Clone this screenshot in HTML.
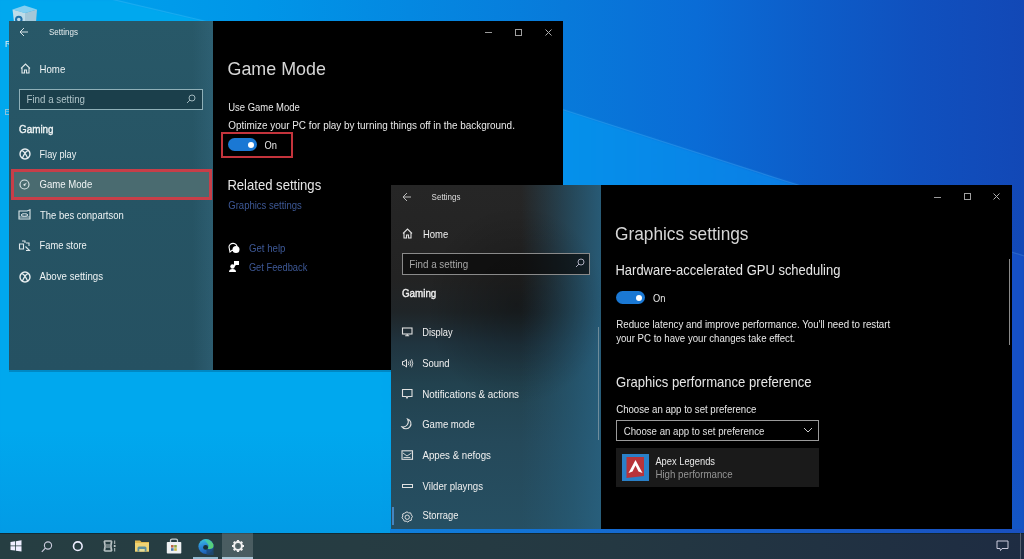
<!DOCTYPE html>
<html><head><meta charset="utf-8"><style>
html,body{margin:0;padding:0;width:1024px;height:559px;overflow:hidden;background:#0a6fd0}
body{position:relative;font-family:"Liberation Sans", sans-serif}
.t{position:absolute;white-space:nowrap;line-height:normal;font-family:"Liberation Sans", sans-serif}
svg{overflow:visible}
</style></head><body>
<div style="position:absolute;left:0px;top:0px;width:1024px;height:559px;background:linear-gradient(90deg,rgb(0,165,238) 0%,rgb(0,150,232) 25%,rgb(8,122,218) 55%,rgb(10,108,214) 68%,rgb(13,92,200) 80%,rgb(16,80,190) 90%,rgb(18,72,182) 100%)"></div>
<div style="position:absolute;left:0;top:0;width:1024px;height:559px;filter:blur(1px)"><div style="position:absolute;left:0;top:0;width:1024px;height:559px;clip-path:polygon(0px -27px,200px 20px,564px 110px,782px 180px,1024px 256px,1024px 559px,0px 559px);background:linear-gradient(90deg,rgb(0,168,238) 0%,rgb(0,168,238) 37%,rgb(5,145,235) 55%,rgb(10,128,230) 75%,rgb(16,100,212) 88%,rgb(22,78,195) 100%)"></div></div>
<svg style="position:absolute;left:0;top:0" width="1024" height="559"><polyline points="0,-27 200,20 564,110 782,180 1024,256" fill="none" stroke="rgba(140,210,255,.18)" stroke-width="1.2"/></svg>
<div style="position:absolute;left:0px;top:430px;width:1024px;height:103px;background:linear-gradient(180deg,rgba(10,110,200,0),rgba(10,110,200,.22))"></div>
<svg style="position:absolute;left:0px;top:0px;" width="42" height="22" viewBox="0 0 42 22"><path d="M12.5 9.5 L24.5 5.5 L37 9.5 L25 13 Z" fill="rgba(175,220,242,.75)"/><path d="M12.5 9.5 L25 13 L25 22 L14 22 Z" fill="rgba(205,225,232,.92)"/><path d="M25 13 L37 9.5 L36 22 L25 22 Z" fill="rgba(178,202,214,.92)"/><circle cx="18.8" cy="19.5" r="2.8" fill="none" stroke="#1f70a8" stroke-width="2"/></svg>
<div class="t" style="left:5.00px;top:38.61px;font-size:8.50px;color:#e6eef2;font-weight:400;transform:scaleY(1.13);transform-origin:0 7.69px;">R</div>
<div class="t" style="left:4.50px;top:106.81px;font-size:8.50px;color:#a8c8d8;font-weight:400;transform:scaleY(1.13);transform-origin:0 7.69px;">E</div>
<div style="position:absolute;left:9px;top:21px;width:204px;height:349px;background:linear-gradient(180deg,#285868 0%,#265464 50%,#255162 100%)"></div>
<div style="position:absolute;left:9px;top:21px;width:204px;height:349px;background:linear-gradient(90deg,rgba(60,115,140,0) 90%,rgba(60,115,140,.3) 100%)"></div>
<div style="position:absolute;left:213px;top:21px;width:350px;height:349px;background:#000"></div>
<div style="position:absolute;left:9px;top:370px;width:554px;height:2px;background:rgba(0,40,70,.25)"></div>
<svg style="position:absolute;left:19px;top:27px;" width="10" height="10" viewBox="0 0 10 10"><path d="M1 5 H9 M1 5 L5 1 M1 5 L5 9" stroke="#d8e2e6" stroke-width="1" fill="none"/></svg>
<div class="t" style="left:49.00px;top:28.06px;font-size:8.00px;color:#e8eef0;font-weight:400;transform:scaleY(1.13);transform-origin:0 7.24px;">Settings</div>
<div style="position:absolute;left:485px;top:32px;width:7px;height:1px;background:#9a9a9a"></div>
<div style="position:absolute;left:514.5px;top:29px;width:7px;height:7px;border:1px solid #a0a0a0;box-sizing:border-box"></div>
<svg style="position:absolute;left:544.5px;top:29px;" width="7" height="7" viewBox="0 0 7 7"><path d="M0.5 0.5 L6.5 6.5 M6.5 0.5 L0.5 6.5" stroke="#b0b0b0" stroke-width="1"/></svg>
<svg style="position:absolute;left:20px;top:63px;" width="11" height="11" viewBox="0 0 11 11"><path d="M1 5.5 L5.5 1 L10 5.5 M2 4.5 V10 H4.5 V7 H6.5 V10 H9 V4.5" stroke="#dfe8ea" stroke-width="1.1" fill="none"/></svg>
<div class="t" style="left:39.50px;top:63.96px;font-size:9.66px;color:#eef3f4;font-weight:400;transform:scaleY(1.13);transform-origin:0 8.74px;">Home</div>
<div style="position:absolute;left:19px;top:89px;width:184px;height:21px;border:1.5px solid #8fb0b8;box-sizing:border-box;background:#1b3f4b"></div>
<div class="t" style="left:26.50px;top:93.88px;font-size:9.75px;color:#aec3c8;font-weight:400;transform:scaleY(1.13);transform-origin:0 8.82px;">Find a setting</div>
<svg style="position:absolute;left:186px;top:94px;" width="10" height="10" viewBox="0 0 10 10"><circle cx="6" cy="4" r="3" stroke="#9fb6bc" stroke-width="1" fill="none"/><path d="M4 6 L1 9" stroke="#9fb6bc" stroke-width="1"/></svg>
<div class="t" style="left:19.00px;top:124.04px;font-size:9.90px;color:#eef3f4;font-weight:400;transform:scaleY(1.13);transform-origin:0 8.96px;-webkit-text-stroke:0.35px #eef3f4;">Gaming</div>
<svg style="position:absolute;left:18.5px;top:148px;" width="12" height="12" viewBox="0 0 12 12"><circle cx="6" cy="6" r="5" stroke="#e8eef0" stroke-width="1.4" fill="none"/><path d="M2.6 2.6 Q5.5 2.6 8.8 10.6 M9.4 2.6 Q6.5 2.6 3.2 10.6" stroke="#e8eef0" stroke-width="1.3" fill="none"/></svg>
<div class="t" style="left:39.50px;top:149.87px;font-size:9.20px;color:#eef3f4;font-weight:400;transform:scaleY(1.13);transform-origin:0 8.33px;">Flay play</div>
<div style="position:absolute;left:11px;top:169px;width:201px;height:31px;background:#4a6b70;border:3px solid #c83e48;box-sizing:border-box"></div>
<svg style="position:absolute;left:19px;top:179px;" width="11" height="11" viewBox="0 0 11 11"><circle cx="5.5" cy="5.5" r="4.5" stroke="#dde7ea" stroke-width="1.1" fill="none"/><circle cx="5.5" cy="5.8" r="1.1" fill="#dde7ea"/><path d="M5.5 5.8 L7.5 3.8" stroke="#dde7ea" stroke-width="0.9"/></svg>
<div class="t" style="left:39.50px;top:179.31px;font-size:9.60px;color:#eef3f4;font-weight:400;transform:scaleY(1.13);transform-origin:0 8.69px;">Game Mode</div>
<svg style="position:absolute;left:18px;top:209px;" width="13" height="11" viewBox="0 0 13 11"><path d="M1 2 H9 L12 0.8 V10 H1 Z" stroke="#dde7ea" stroke-width="1.1" fill="none"/><ellipse cx="6.5" cy="6" rx="3.3" ry="1.3" stroke="#dde7ea" stroke-width="1" fill="none"/><path d="M1 8 H12" stroke="#dde7ea" stroke-width="0.8"/></svg>
<div class="t" style="left:40.00px;top:210.43px;font-size:9.47px;color:#eef3f4;font-weight:400;transform:scaleY(1.13);transform-origin:0 8.57px;">The bes conpartson</div>
<svg style="position:absolute;left:18px;top:240px;" width="13" height="11" viewBox="0 0 13 11"><path d="M1.5 4 H5.5 V9 H1.5 Z M4 1 H7 L7 3 M8 3 L11 3 V6 M7.5 6.5 L11.5 10.5 H8" stroke="#dde7ea" stroke-width="1.1" fill="none"/></svg>
<div class="t" style="left:39.50px;top:240.66px;font-size:9.33px;color:#eef3f4;font-weight:400;transform:scaleY(1.13);transform-origin:0 8.44px;">Fame store</div>
<svg style="position:absolute;left:18.5px;top:270.5px;" width="12" height="12" viewBox="0 0 12 12"><circle cx="6" cy="6" r="5" stroke="#e8eef0" stroke-width="1.4" fill="none"/><path d="M2.6 2.6 Q5.5 2.6 8.8 10.6 M9.4 2.6 Q6.5 2.6 3.2 10.6" stroke="#e8eef0" stroke-width="1.3" fill="none"/></svg>
<div class="t" style="left:39.50px;top:271.22px;font-size:9.70px;color:#eef3f4;font-weight:400;transform:scaleY(1.13);transform-origin:0 8.78px;">Above settings</div>
<div class="t" style="left:227.50px;top:58.80px;font-size:17.90px;color:#d6d6d6;font-weight:400;transform:scaleY(1.02);transform-origin:0 16.20px;">Game Mode</div>
<div class="t" style="left:228.30px;top:102.14px;font-size:9.46px;color:#e8e8e8;font-weight:400;transform:scaleY(1.13);transform-origin:0 8.56px;">Use Game Mode</div>
<div class="t" style="left:228.30px;top:120.40px;font-size:9.94px;color:#e8e8e8;font-weight:400;transform:scaleY(1.13);transform-origin:0 9.00px;">Optimize your PC for play by turning things off in the background.</div>
<div style="position:absolute;left:220.5px;top:132px;width:72.5px;height:26px;border:2.5px solid #c4343c;box-sizing:border-box"></div>
<div style="position:absolute;left:228px;top:138px;width:29px;height:13px;background:#1a78d4;border-radius:7px"></div>
<div style="position:absolute;left:247.5px;top:141.5px;width:6px;height:6px;background:#fff;border-radius:3px"></div>
<div class="t" style="left:264.50px;top:141.08px;font-size:9.30px;color:#e8e8e8;font-weight:400;transform:scaleY(1.13);transform-origin:0 8.42px;">On</div>
<div class="t" style="left:227.40px;top:177.76px;font-size:13.08px;color:#e6e6e6;font-weight:400;transform:scaleY(1.08);transform-origin:0 11.84px;">Related settings</div>
<div class="t" style="left:228.30px;top:199.58px;font-size:9.52px;color:#3d5896;font-weight:400;transform:scaleY(1.13);transform-origin:0 8.62px;">Graphics settings</div>
<svg style="position:absolute;left:228px;top:242px;" width="12" height="12" viewBox="0 0 12 12"><path d="M1 5 a4 3.5 0 1 1 3 3.3 L2 10 Z" fill="none" stroke="#fff" stroke-width="1.1"/><circle cx="8" cy="7.5" r="3.5" fill="#fff"/></svg>
<div class="t" style="left:248.90px;top:242.76px;font-size:9.66px;color:#3d5896;font-weight:400;transform:scaleY(1.13);transform-origin:0 8.74px;">Get help</div>
<svg style="position:absolute;left:228px;top:260px;" width="12" height="13" viewBox="0 0 12 13"><path d="M6 1 H11 V5 H8 L6 7 Z" fill="#fff"/><circle cx="4.5" cy="6.5" r="2.2" fill="#fff"/><path d="M1 12 Q1 9 4.5 9 Q8 9 8 12 Z" fill="#fff"/></svg>
<div class="t" style="left:248.90px;top:263.18px;font-size:9.30px;color:#3d5896;font-weight:400;transform:scaleY(1.13);transform-origin:0 8.42px;">Get Feedback</div>
<div style="position:absolute;left:390.5px;top:185px;width:210.5px;height:344px;background:linear-gradient(180deg,#262626 0%,#232323 27%,#1f2528 37%,#20343f 46%,#22424f 58%,#25495a 75%,#264f62 100%)"></div>
<div style="position:absolute;left:390.5px;top:185px;width:210.5px;height:344px;background:linear-gradient(90deg,rgba(38,90,118,0) 0%,rgba(38,90,118,0) 62%,rgba(38,90,118,.3) 74%,rgba(38,92,120,.65) 87%,rgba(40,96,126,.9) 100%)"></div>
<div style="position:absolute;left:390.5px;top:185px;width:210.5px;height:344px;background:radial-gradient(ellipse 90px 100px at 125px 120px,rgba(0,0,0,.3),rgba(0,0,0,0))"></div>
<div style="position:absolute;left:601px;top:185px;width:411px;height:344px;background:#000"></div>
<svg style="position:absolute;left:402px;top:192px;" width="10" height="10" viewBox="0 0 10 10"><path d="M1 5 H9 M1 5 L5 1 M1 5 L5 9" stroke="#bbb" stroke-width="1" fill="none"/></svg>
<div class="t" style="left:431.60px;top:192.76px;font-size:8.00px;color:#ddd;font-weight:400;transform:scaleY(1.13);transform-origin:0 7.24px;">Settings</div>
<div style="position:absolute;left:934px;top:196.5px;width:7px;height:1px;background:#9a9a9a"></div>
<div style="position:absolute;left:963.5px;top:193px;width:7px;height:7px;border:1px solid #a0a0a0;box-sizing:border-box"></div>
<svg style="position:absolute;left:993px;top:193px;" width="7" height="7" viewBox="0 0 7 7"><path d="M0.5 0.5 L6.5 6.5 M6.5 0.5 L0.5 6.5" stroke="#b0b0b0" stroke-width="1"/></svg>
<svg style="position:absolute;left:402px;top:228px;" width="11" height="11" viewBox="0 0 11 11"><path d="M1 5.5 L5.5 1 L10 5.5 M2 4.5 V10 H4.5 V7 H6.5 V10 H9 V4.5" stroke="#e0e0e0" stroke-width="1.1" fill="none"/></svg>
<div class="t" style="left:423.00px;top:228.62px;font-size:9.48px;color:#f0f0f0;font-weight:400;transform:scaleY(1.13);transform-origin:0 8.58px;">Home</div>
<div style="position:absolute;left:402px;top:253px;width:188px;height:22px;border:1.5px solid #8a8a8a;box-sizing:border-box;background:rgba(10,10,10,.7)"></div>
<div class="t" style="left:409.30px;top:258.80px;font-size:9.83px;color:#a8a8a8;font-weight:400;transform:scaleY(1.13);transform-origin:0 8.90px;">Find a setting</div>
<svg style="position:absolute;left:575px;top:258px;" width="10" height="10" viewBox="0 0 10 10"><circle cx="6" cy="4" r="3" stroke="#aab" stroke-width="1" fill="none"/><path d="M4 6 L1 9" stroke="#aab" stroke-width="1"/></svg>
<div class="t" style="left:402.00px;top:288.23px;font-size:9.80px;color:#f0f0f0;font-weight:400;transform:scaleY(1.13);transform-origin:0 8.87px;-webkit-text-stroke:0.35px #f0f0f0;">Gaming</div>
<svg style="position:absolute;left:401px;top:327px;" width="12" height="10" viewBox="0 0 12 10"><rect x="1.5" y="1" width="9.5" height="6" stroke="#e0e0e0" stroke-width="1.1" fill="none"/><path d="M6.2 7 V8.8 M4.2 8.8 H8.2" stroke="#e0e0e0" stroke-width="1.1"/></svg>
<div class="t" style="left:422.20px;top:327.58px;font-size:9.30px;color:#f0f0f0;font-weight:400;transform:scaleY(1.13);transform-origin:0 8.42px;">Display</div>
<svg style="position:absolute;left:401px;top:358px;" width="12" height="11" viewBox="0 0 12 11"><path d="M1.5 3.5 H3 L5.5 1.5 V9 L3 7 H1.5 Z" stroke="#e0e0e0" stroke-width="1" fill="none"/><path d="M7.3 3.5 Q8.5 5.3 7.3 7 M9 2.3 Q10.8 5.3 9 8.3 M10.6 1.2 Q13 5.3 10.6 9.4" stroke="#e0e0e0" stroke-width="0.9" fill="none"/></svg>
<div class="t" style="left:422.20px;top:357.90px;font-size:9.50px;color:#f0f0f0;font-weight:400;transform:scaleY(1.13);transform-origin:0 8.60px;">Sound</div>
<svg style="position:absolute;left:401px;top:388px;" width="12" height="12" viewBox="0 0 12 12"><path d="M1.5 1.5 H11 V8.5 H6.8 L6 10 L5.2 8.5 H1.5 Z" stroke="#e0e0e0" stroke-width="1.1" fill="none"/></svg>
<div class="t" style="left:422.20px;top:388.78px;font-size:9.86px;color:#f0f0f0;font-weight:400;transform:scaleY(1.13);transform-origin:0 8.92px;">Notifications &amp; actions</div>
<svg style="position:absolute;left:401px;top:418px;" width="12" height="12" viewBox="0 0 12 12"><path d="M6.5 1 A5 5 0 1 1 1 8.8 A5.2 5.2 0 0 0 6.5 1 Z" stroke="#e0e0e0" stroke-width="1.1" fill="none"/></svg>
<div class="t" style="left:422.20px;top:419.05px;font-size:9.56px;color:#f0f0f0;font-weight:400;transform:scaleY(1.13);transform-origin:0 8.65px;">Game mode</div>
<svg style="position:absolute;left:401px;top:450px;" width="12" height="11" viewBox="0 0 12 11"><rect x="1" y="0.8" width="10.5" height="8.5" stroke="#e0e0e0" stroke-width="1.1" fill="none"/><path d="M2 3 L6 6 L10.5 3 M2.5 7.5 H9.5" stroke="#e0e0e0" stroke-width="0.9" fill="none"/></svg>
<div class="t" style="left:422.50px;top:450.02px;font-size:9.70px;color:#f0f0f0;font-weight:400;transform:scaleY(1.13);transform-origin:0 8.78px;">Appes &amp; nefogs</div>
<div style="position:absolute;left:402px;top:483.5px;width:10.5px;height:4px;border:1px solid #e0e0e0;box-sizing:border-box"></div>
<div class="t" style="left:422.50px;top:480.76px;font-size:9.66px;color:#f0f0f0;font-weight:400;transform:scaleY(1.13);transform-origin:0 8.74px;">Vilder playngs</div>
<svg style="position:absolute;left:401px;top:511px;" width="12" height="12" viewBox="0 0 12 12"><path d="M6 0.8 L7.6 1.9 L9.6 1.9 L10.3 3.8 L11.4 5.5 L10.4 7.3 L10.3 9.2 L8.3 9.8 L6.8 11 L5.2 10.2 L3.2 10.1 L2.3 8.3 L1 6.8 L1.8 5 L1.7 3 L3.6 2.2 Z" stroke="#e0e0e0" stroke-width="1" fill="none"/><circle cx="6.2" cy="6.2" r="2.2" stroke="#e0e0e0" stroke-width="1" fill="none"/></svg>
<div class="t" style="left:422.50px;top:511.41px;font-size:9.38px;color:#f0f0f0;font-weight:400;transform:scaleY(1.13);transform-origin:0 8.49px;">Storrage</div>
<div style="position:absolute;left:392px;top:507px;width:1.5px;height:18px;background:#4585c0"></div>
<div style="position:absolute;left:598px;top:327px;width:1px;height:113px;background:rgba(200,200,200,.45)"></div>
<div class="t" style="left:615.00px;top:223.84px;font-size:17.30px;color:#d6d6d6;font-weight:400;transform:scaleY(1.02);transform-origin:0 15.66px;">Graphics settings</div>
<div class="t" style="left:615.50px;top:263.26px;font-size:12.97px;color:#e6e6e6;font-weight:400;transform:scaleY(1.08);transform-origin:0 11.74px;">Hardware-accelerated GPU scheduling</div>
<div style="position:absolute;left:616px;top:291px;width:29px;height:13px;background:#1a78d4;border-radius:7px"></div>
<div style="position:absolute;left:635.5px;top:294.5px;width:6px;height:6px;background:#fff;border-radius:3px"></div>
<div class="t" style="left:653.00px;top:293.98px;font-size:9.30px;color:#e8e8e8;font-weight:400;transform:scaleY(1.13);transform-origin:0 8.42px;">On</div>
<div class="t" style="left:616.20px;top:318.79px;font-size:9.74px;color:#e8e8e8;font-weight:400;transform:scaleY(1.13);transform-origin:0 8.81px;">Reduce latency and improve performance. You'll need to restart</div>
<div class="t" style="left:616.20px;top:332.52px;font-size:9.65px;color:#e8e8e8;font-weight:400;transform:scaleY(1.13);transform-origin:0 8.73px;">your PC to have your changes take effect.</div>
<div class="t" style="left:616.00px;top:375.15px;font-size:13.09px;color:#e6e6e6;font-weight:400;transform:scaleY(1.08);transform-origin:0 11.85px;">Graphics performance preference</div>
<div class="t" style="left:616.20px;top:404.28px;font-size:9.64px;color:#e8e8e8;font-weight:400;transform:scaleY(1.13);transform-origin:0 8.72px;">Choose an app to set preference</div>
<div style="position:absolute;left:616px;top:420px;width:203px;height:21px;border:1.5px solid #9a9a9a;box-sizing:border-box"></div>
<div class="t" style="left:623.70px;top:426.06px;font-size:9.66px;color:#e0e0e0;font-weight:400;transform:scaleY(1.13);transform-origin:0 8.74px;">Choose an app to set preference</div>
<svg style="position:absolute;left:803px;top:427px;" width="10" height="6" viewBox="0 0 10 6"><path d="M1 1 L5 5 L9 1" stroke="#ccc" stroke-width="1" fill="none"/></svg>
<div style="position:absolute;left:616px;top:448px;width:203px;height:39px;background:#1a1a1a"></div>
<div style="position:absolute;left:622px;top:453.5px;width:27px;height:27px;background:#2a80c8"></div>
<svg style="position:absolute;left:622px;top:453.5px;" width="27" height="27" viewBox="0 0 27 27"><path d="M4.5 3 H22 V22 L4.5 24 Z" fill="#b8343a"/></svg>
<svg style="position:absolute;left:622px;top:453.5px;" width="27" height="27" viewBox="0 0 27 27"><path d="M13.5 6 L20.5 19 L16.5 17.5 L13.5 11.5 L10.5 17.5 L6.5 19 Z" fill="#fff"/></svg>
<div class="t" style="left:655.40px;top:457.36px;font-size:9.33px;color:#e8e8e8;font-weight:400;transform:scaleY(1.13);transform-origin:0 8.44px;">Apex Legends</div>
<div class="t" style="left:655.40px;top:469.20px;font-size:9.72px;color:#959595;font-weight:400;transform:scaleY(1.13);transform-origin:0 8.80px;">High performance</div>
<div style="position:absolute;left:1008.5px;top:259px;width:1px;height:86px;background:#8a8a8a"></div>
<div style="position:absolute;left:390px;top:529px;width:634px;height:4px;background:linear-gradient(90deg,rgb(15,128,220) 0%,rgb(22,100,205) 45%,rgb(25,80,192) 100%)"></div>
<div style="position:absolute;left:0px;top:533px;width:1024px;height:26px;background:linear-gradient(90deg,#263e42 0%,#263c42 35%,#243842 60%,#1e2c42 100%)"></div>
<div style="position:absolute;left:0px;top:533px;width:1024px;height:1px;background:rgba(12,35,45,.7)"></div>
<svg style="position:absolute;left:10px;top:540px;" width="12" height="12" viewBox="0 0 12 12"><path d="M0.5 2 L5 1.3 V5.5 H0.5 Z M5.8 1.2 L11.5 0.3 V5.5 H5.8 Z M0.5 6.3 H5 V10.6 L0.5 10 Z M5.8 6.3 H11.5 V11.6 L5.8 10.8 Z" fill="#eef"/></svg>
<svg style="position:absolute;left:41px;top:541px;" width="12" height="12" viewBox="0 0 12 12"><circle cx="7" cy="4.5" r="3.6" stroke="#ccd" stroke-width="1.1" fill="none"/><path d="M4.4 7.2 L0.8 10.8" stroke="#ccd" stroke-width="1.2"/></svg>
<svg style="position:absolute;left:72px;top:541px;" width="12" height="12" viewBox="0 0 12 12"><circle cx="5.8" cy="5.2" r="4.3" stroke="#eef" stroke-width="1.6" fill="none"/></svg>
<svg style="position:absolute;left:103px;top:540px;" width="14" height="12" viewBox="0 0 14 12"><path d="M1.2 1 Q3 6 1.2 11 M8.8 1 Q7 6 8.8 11 M1.2 1 H8.8 M1.2 11 H8.8" stroke="#b8c2c4" stroke-width="1.6" fill="none"/><path d="M3 5 H7 M3 7 H7" stroke="#b8c2c4" stroke-width="1"/><path d="M11.7 0.5 V4 M11.7 8 V11.5" stroke="#b8c2c4" stroke-width="1"/><circle cx="11.7" cy="6" r="1.1" fill="#c8d0d2"/></svg>
<svg style="position:absolute;left:134px;top:539px;" width="16" height="13" viewBox="0 0 16 13"><path d="M1 1.5 H6 L7.5 3 H15 V12.5 H1 Z" fill="#e2b94e"/><rect x="1" y="4" width="14" height="8.5" fill="#f0d474"/><path d="M3.5 12.5 V9 Q3.5 7.5 5 7.5 H11 Q12.5 7.5 12.5 9 V12.5 H10.5 V10 H5.5 V12.5 Z" fill="#5c8f9c"/><rect x="5.5" y="10" width="5" height="2.5" fill="#e4dc98"/></svg>
<svg style="position:absolute;left:166px;top:538px;" width="16" height="16" viewBox="0 0 16 16"><path d="M4.5 4 V2.5 Q4.5 1.2 6 1.2 H10 Q11.5 1.2 11.5 2.5 V4" stroke="#c4cfd2" stroke-width="1.3" fill="none"/><rect x="0.8" y="4" width="14.5" height="11.5" rx="0.8" fill="#eef1f3"/><rect x="5" y="7" width="2.6" height="2.6" fill="#b86448"/><rect x="8.2" y="7" width="2.6" height="2.6" fill="#8aa640"/><rect x="5" y="10.2" width="2.6" height="2.6" fill="#4c78a8"/><rect x="8.2" y="10.2" width="2.6" height="2.6" fill="#c8b840"/></svg>
<svg style="position:absolute;left:197px;top:538px;" width="18" height="17" viewBox="0 0 18 17"><defs><linearGradient id="eg" x1="0.2" y1="0" x2="0.5" y2="1"><stop offset="0" stop-color="#3cc4dc"/><stop offset="0.45" stop-color="#2a88d8"/><stop offset="1" stop-color="#1c5cb0"/></linearGradient><linearGradient id="eg2" x1="0" y1="0" x2="1" y2="0.5"><stop offset="0" stop-color="#38c4c4"/><stop offset="1" stop-color="#5ad070"/></linearGradient></defs><circle cx="9" cy="8.5" r="7.6" fill="url(#eg)"/><path d="M9.5 10.5 Q12.5 12 16.6 10 L16.6 17 L9.5 17 Z" fill="#1d4a78" opacity="0.8"/><path d="M7 1.6 Q13.5 0.6 16.4 6.5 Q17 10.5 13 11 Q10.5 11.3 10 10.3 Q12.8 8.5 10.8 6 Q9.5 4.5 7 1.6 Z" fill="url(#eg2)"/><ellipse cx="8.6" cy="9.4" rx="2.5" ry="2.3" fill="#173038"/></svg>
<div style="position:absolute;left:222px;top:533px;width:31px;height:26px;background:rgba(255,255,255,.17)"></div>
<svg style="position:absolute;left:231px;top:539px;" width="14" height="14" viewBox="0 0 14 14"><g transform="translate(7 7)"><circle r="3.9" stroke="#f0f0f0" stroke-width="2" fill="none"/><g stroke="#f0f0f0" stroke-width="2.2"><path d="M0 -4 V-6" transform="rotate(0)"/><path d="M0 -4 V-6" transform="rotate(45)"/><path d="M0 -4 V-6" transform="rotate(90)"/><path d="M0 -4 V-6" transform="rotate(135)"/><path d="M0 -4 V-6" transform="rotate(180)"/><path d="M0 -4 V-6" transform="rotate(225)"/><path d="M0 -4 V-6" transform="rotate(270)"/><path d="M0 -4 V-6" transform="rotate(315)"/></g><circle r="2" fill="none" stroke="#f0f0f0" stroke-width="0.1"/></g></svg>
<div style="position:absolute;left:193px;top:557px;width:25px;height:2px;background:#8fb8d0"></div>
<div style="position:absolute;left:222px;top:557px;width:31px;height:2px;background:#a8c4d4"></div>
<svg style="position:absolute;left:996px;top:540px;" width="13" height="12" viewBox="0 0 13 12"><path d="M1 1 H12 V8.5 H6 L4.5 10.5 L4 8.5 H1 Z" stroke="#ccd" stroke-width="1" fill="none"/></svg>
<div style="position:absolute;left:1020px;top:533px;width:1px;height:26px;background:rgba(255,255,255,.25)"></div>
</body></html>
